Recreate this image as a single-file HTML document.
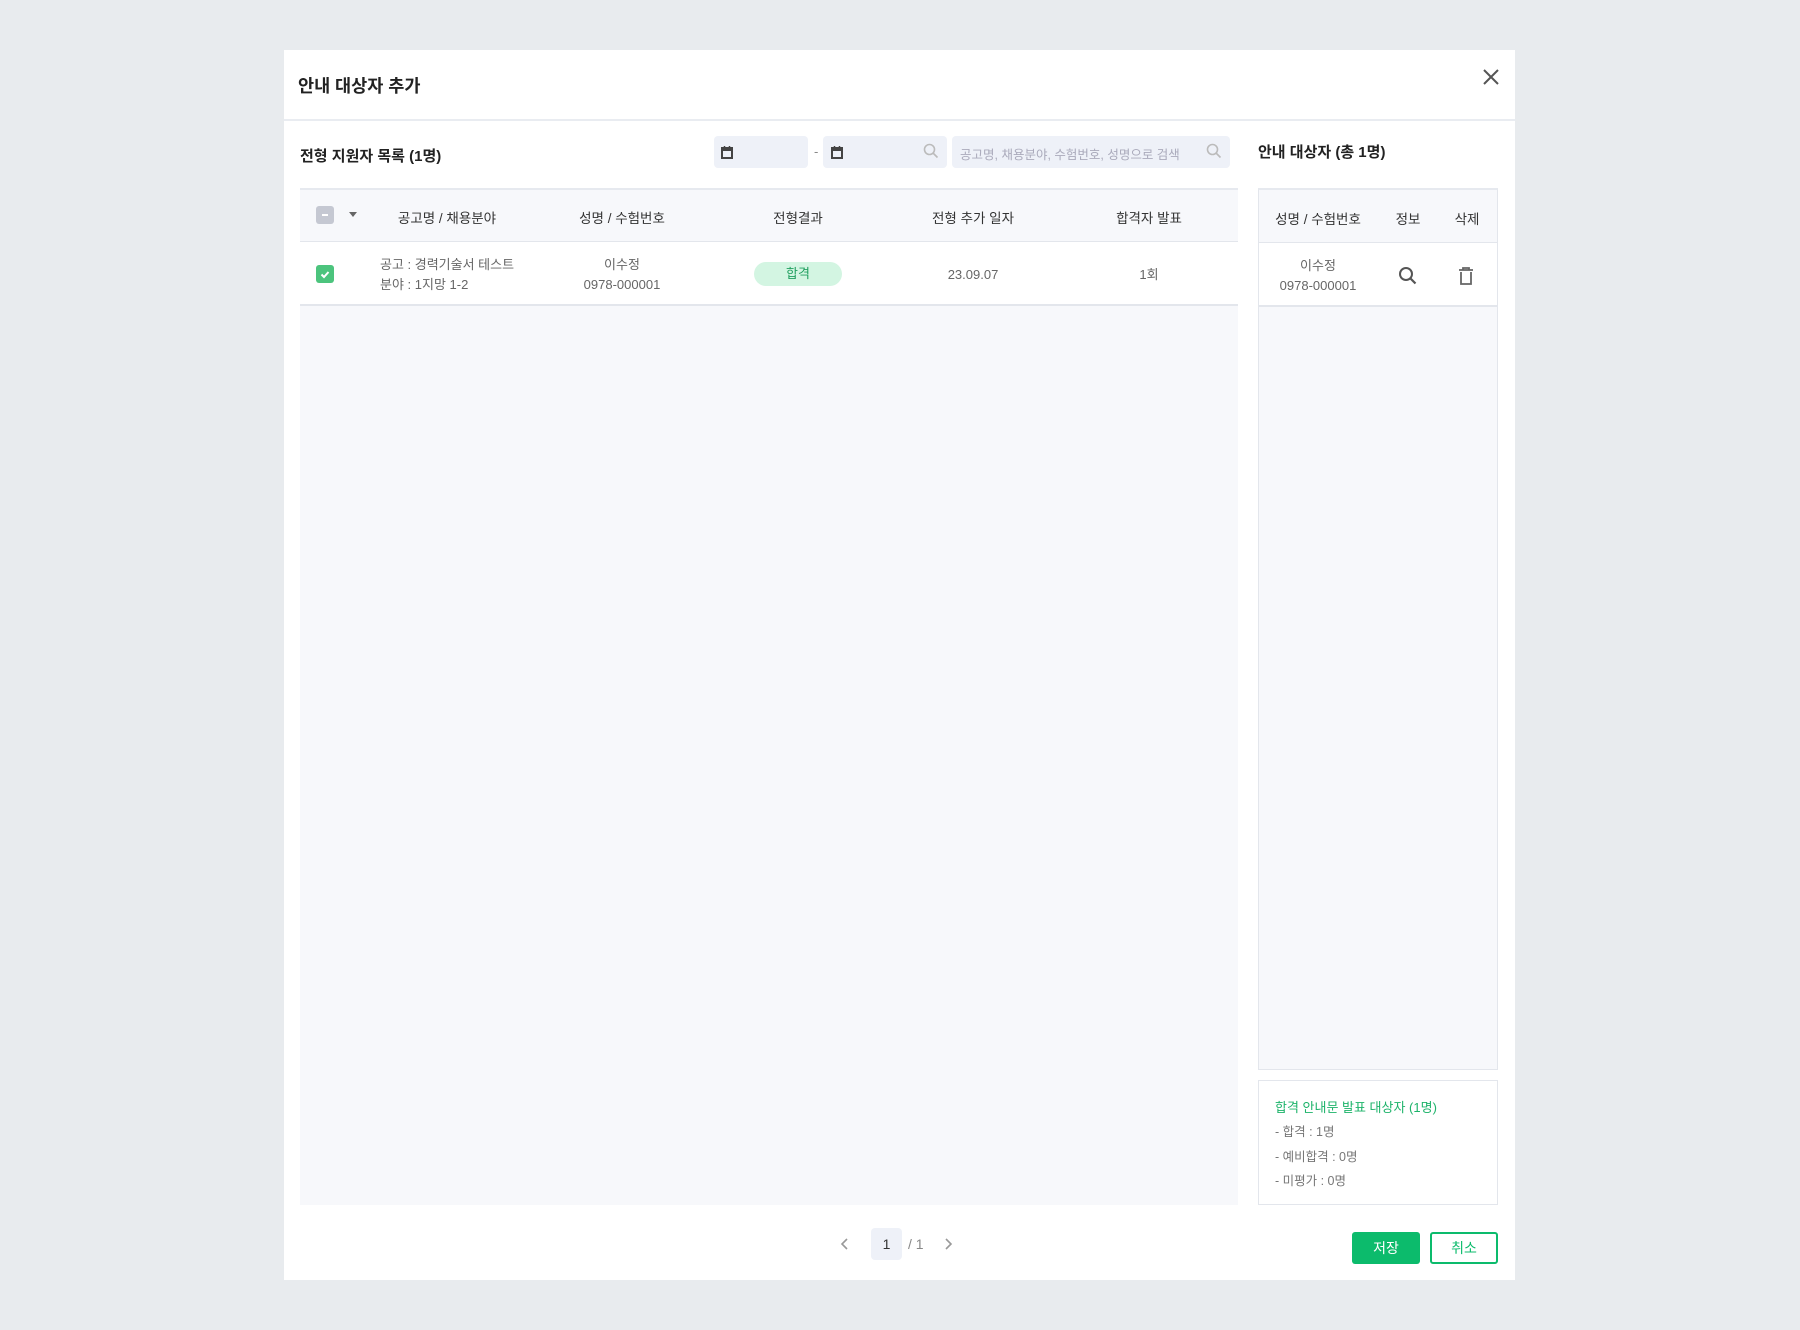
<!DOCTYPE html>
<html><head><meta charset="utf-8"><style>
*{box-sizing:border-box;margin:0;padding:0}
body{width:1800px;height:1330px;background:#e8ebee;font-family:"Liberation Sans","Noto Sans CJK KR",sans-serif;position:relative;overflow:hidden;color:#333}
.a{position:absolute}
.modal{left:284px;top:50px;width:1231px;height:1230px;background:#fff}
.c{transform:translateX(-50%);white-space:nowrap;text-align:center}
.th{font-size:13.5px;color:#333}
.td{font-size:13px;color:#666;line-height:20px}
</style></head><body>
<div class="a modal"></div>
<div class="a" style="left:298px;top:73px;font-size:17.5px;font-weight:bold;color:#222">안내 대상자 추가</div>
<svg class="a" style="left:1482px;top:68px" width="18" height="18" viewBox="0 0 18 18"><path d="M2 2L16 16M16 2L2 16" stroke="#555" stroke-width="2"/></svg>
<div class="a" style="left:284px;top:119px;width:1231px;height:2px;background:#e9ecf1"></div>

<div class="a" style="left:300px;top:145px;font-size:15px;font-weight:bold;color:#222">전형 지원자 목록 (1명)</div>
<div class="a" style="left:714px;top:136px;width:94px;height:32px;background:#eef1f8;border-radius:4px"></div>
<div class="a" style="left:814px;top:144px;font-size:13px;color:#888">-</div>
<div class="a" style="left:823px;top:136px;width:124px;height:32px;background:#eef1f8;border-radius:4px"></div>
<div class="a" style="left:952px;top:136px;width:278px;height:32px;background:#eef1f8;border-radius:4px"></div>
<svg class="a" style="left:720px;top:145px" width="14" height="14" viewBox="0 0 14 14"><rect x="2" y="3" width="10" height="10" fill="none" stroke="#444" stroke-width="2"/><rect x="2" y="3" width="10" height="3" fill="#444"/><path d="M4.5 1v3M9.5 1v3" stroke="#444" stroke-width="1.5"/></svg>
<svg class="a" style="left:830px;top:145px" width="14" height="14" viewBox="0 0 14 14"><rect x="2" y="3" width="10" height="10" fill="none" stroke="#444" stroke-width="2"/><rect x="2" y="3" width="10" height="3" fill="#444"/><path d="M4.5 1v3M9.5 1v3" stroke="#444" stroke-width="1.5"/></svg>
<svg class="a" style="left:923px;top:143px" width="16" height="16" viewBox="0 0 16 16"><circle cx="6.5" cy="6.5" r="5" fill="none" stroke="#bbb" stroke-width="1.6"/><path d="M10 10l4.5 4.5" stroke="#bbb" stroke-width="1.6"/></svg>
<div class="a" style="left:960px;top:144px;font-size:12.5px;color:#aab">공고명, 채용분야, 수험번호, 성명으로 검색</div>
<svg class="a" style="left:1206px;top:143px" width="16" height="16" viewBox="0 0 16 16"><circle cx="6.5" cy="6.5" r="5" fill="none" stroke="#bbb" stroke-width="1.6"/><path d="M10 10l4.5 4.5" stroke="#bbb" stroke-width="1.6"/></svg>

<div class="a" style="left:300px;top:188px;width:938px;height:1017px;background:#f7f8fb;border-top:2px solid #e6e9ef"></div>
<div class="a" style="left:300px;top:241px;width:938px;height:65px;background:#fff;border-top:1px solid #e3e6ec;border-bottom:2px solid #e3e6ec"></div>
<div class="a" style="left:316px;top:206px;width:18px;height:18px;background:#c5c8d2;border-radius:3px"></div>
<div class="a" style="left:322px;top:214px;width:6px;height:2px;background:#fff"></div>
<svg class="a" style="left:348px;top:211px" width="10" height="8" viewBox="0 0 10 8"><path d="M1 1h8L5 6z" fill="#666"/></svg>
<div class="a th c" style="left:447px;top:207px">공고명 / 채용분야</div>
<div class="a th c" style="left:622px;top:207px">성명 / 수험번호</div>
<div class="a th c" style="left:798px;top:207px">전형결과</div>
<div class="a th c" style="left:973px;top:207px">전형 추가 일자</div>
<div class="a th c" style="left:1149px;top:207px">합격자 발표</div>

<div class="a" style="left:316px;top:265px;width:18px;height:18px;background:#4cc47d;border-radius:3px"></div>
<svg class="a" style="left:318px;top:267px" width="14" height="14" viewBox="0 0 14 14"><path d="M3.5 7.5l2.5 2.5 4.5-5" fill="none" stroke="#fff" stroke-width="2"/></svg>
<div class="a td" style="left:380px;top:255px">공고 : 경력기술서 테스트<br>분야 : 1지망 1-2</div>
<div class="a td c" style="left:622px;top:255px">이수정<br>0978-000001</div>
<div class="a c" style="left:798px;top:262px;width:88px;height:24px;background:#d3f5e2;border-radius:12px;font-size:13px;color:#22a060;line-height:24px">합격</div>
<div class="a td c" style="left:973px;top:265px">23.09.07</div>
<div class="a td c" style="left:1149px;top:265px">1회</div>

<div class="a" style="left:1258px;top:141px;font-size:15px;font-weight:bold;color:#222">안내 대상자 (총 1명)</div>
<div class="a" style="left:1258px;top:188px;width:240px;height:882px;background:#f7f8fb;border:1px solid #e3e6ec;border-top:2px solid #e6e9ef"></div>
<div class="a" style="left:1259px;top:242px;width:238px;height:65px;background:#fff;border-top:1px solid #e3e6ec;border-bottom:2px solid #e3e6ec"></div>
<div class="a th c" style="left:1318px;top:208px">성명 / 수험번호</div>
<div class="a th c" style="left:1408px;top:208px">정보</div>
<div class="a th c" style="left:1467px;top:208px">삭제</div>
<div class="a td c" style="left:1318px;top:256px">이수정<br>0978-000001</div>
<svg class="a" style="left:1398px;top:266px" width="20" height="20" viewBox="0 0 20 20"><circle cx="8" cy="8" r="6" fill="none" stroke="#555" stroke-width="2"/><path d="M12.5 12.5l5 5" stroke="#555" stroke-width="2.2"/></svg>
<svg class="a" style="left:1457px;top:266px" width="18" height="20" viewBox="0 0 18 20"><path d="M2 4h14M6 4V2h6v2M4 6v12h10V6" fill="none" stroke="#666" stroke-width="1.8"/></svg>

<div class="a" style="left:1258px;top:1080px;width:240px;height:125px;border:1px solid #e3e6ec;background:#fff"></div>
<div class="a" style="left:1275px;top:1096px;font-size:13px;color:#1db36a;line-height:24px">합격 안내문 발표 대상자 (1명)</div>
<div class="a" style="left:1275px;top:1120px;font-size:12.5px;color:#777;line-height:24.5px">- 합격 : 1명<br>- 예비합격 : 0명<br>- 미평가 : 0명</div>

<svg class="a" style="left:840px;top:1237px" width="10" height="14" viewBox="0 0 10 14"><path d="M7 2L2 7l5 5" fill="none" stroke="#999" stroke-width="1.6"/></svg>
<div class="a" style="left:871px;top:1228px;width:31px;height:32px;background:#eef1f8;border-radius:4px;text-align:center;line-height:32px;font-size:14px;color:#333">1</div>
<div class="a" style="left:908px;top:1236px;font-size:14px;color:#888">/ 1</div>
<svg class="a" style="left:943px;top:1237px" width="10" height="14" viewBox="0 0 10 14"><path d="M3 2l5 5-5 5" fill="none" stroke="#999" stroke-width="1.6"/></svg>

<div class="a" style="left:1352px;top:1232px;width:68px;height:32px;background:#0cbb6c;border-radius:3px;color:#fff;font-size:14px;text-align:center;line-height:32px">저장</div>
<div class="a" style="left:1430px;top:1232px;width:68px;height:32px;border:2px solid #0cbb6c;border-radius:3px;color:#0cbb6c;font-size:14px;text-align:center;line-height:28px">취소</div>
</body></html>
